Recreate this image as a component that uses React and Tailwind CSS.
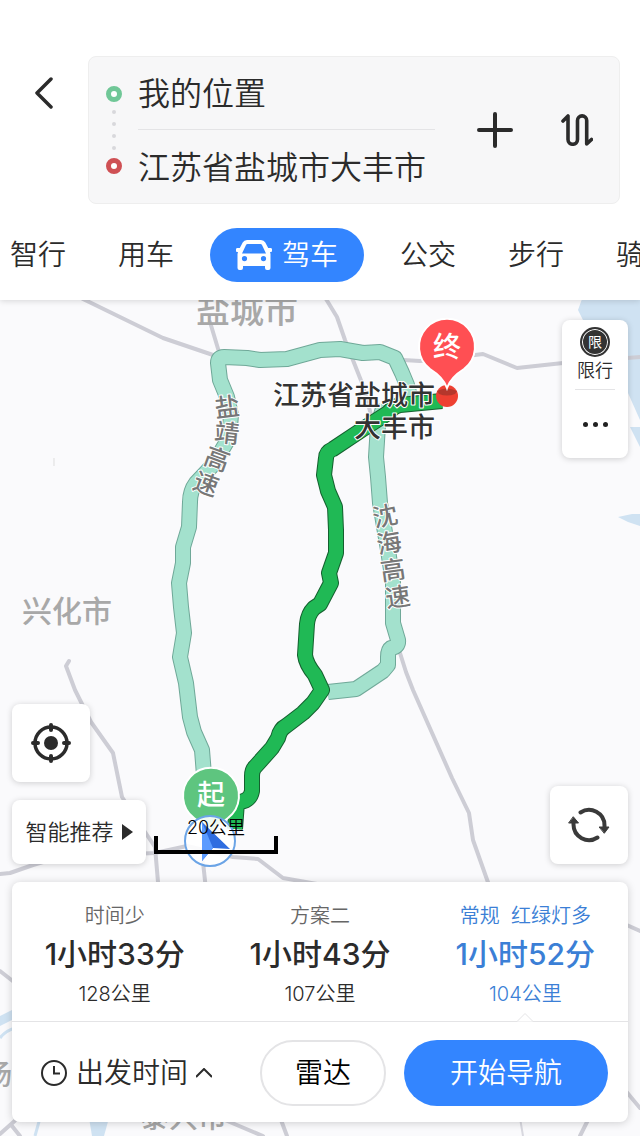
import React, { useState } from 'react'
import clsx from 'clsx'

const modes = ['智行', '用车', '驾车', '公交', '步行', '骑行']

const routes = [
  { id: 1, tag: '时间少', time: '1小时33分', distance: '128公里' },
  { id: 2, tag: '方案二', time: '1小时43分', distance: '107公里' },
  { id: 3, tag: '常规  红绿灯多', time: '1小时52分', distance: '104公里' }
]

// grey roads under the routes
const roads = [
  'M83 299L163 338L213 355',
  'M210 322L219 352',
  'M326 299L337 317L345 340L362 383L372 418',
  'M403 360L420 361L475 355L483 354L517 368L563 363L640 357',
  'M69 661L66 666L75 690L91 722L113 753L122 797L147 835L155 847L158 882',
  'M0 874L10 873L33 865L60 857L155 853L187 846L233 857L258 859L283 878L317 884',
  'M203 862L206 890',
  'M400 653L406 672L413 690L452 778L469 813L473 840L490 888',
  'M620 922L640 931',
  'M620 1084L640 1108',
  'M588 1120L580 1136',
  'M0 971L14 982',
  'M0 1134L18 1118M12 1126L20 1136',
  'M225 1120L263 1136',
  'M281 1120L287 1136'
]

const altRoutes = [
  'M410 396L407 385L402 373L395 358L380 352L363 353L340 349L320 350L287 359L260 360L247 358L224 357Q218 357 218 363L220 380L227 397L231 415L229 438L213 465L196 483Q190 491 190 502L189 527L183 547L183 563L179 583L181 607L184 633L180 657L186 683L190 717L194 732L202 750L204 775',
  'M384 405L378 425L376 457L378 477L380 503L388 550L393 583L393 623L398 640Q399 647 391 648Q388 650 388 657L388 665L383 671L356 689L328 692'
]

const mainRoute =
  'M442 401L400 405Q394 406 388 413L363 429L333 449Q326 452 326 458L324 475L328 491L335 507L336 530L336 553L329 573L331 583L320 604L314 608Q308 614 307 624L305 655Q306 664 315 675L322 690L313 703L303 713L286 726Q280 729 278 738L272 748L255 767Q252 770 252 776L252 791Q250 802 237 802L235 829'

const roadNames = [
  { char: '盐', x: 227, y: 407, angle: -7 },
  { char: '靖', x: 227, y: 433, angle: 6 },
  { char: '高', x: 217, y: 459, angle: 20 },
  { char: '速', x: 206, y: 484, angle: 20 },
  { char: '沈', x: 385, y: 516, angle: -12 },
  { char: '海', x: 389, y: 543, angle: -10 },
  { char: '高', x: 393, y: 570, angle: -8 },
  { char: '速', x: 398, y: 597, angle: -8 }
]

const RouteMap = () => (
  <svg viewBox="0 300 640 836" preserveAspectRatio="xMidYMin slice" className="absolute inset-0 h-full w-full bg-[#fafafc]" aria-hidden="true">
    {/* water */}
    <g fill="#cfe2f2">
      <path d="M582 299L578 310L583 320L600 340L628 393L640 420V299Z" />
      <path d="M630 427H640V447Z" />
      <path d="M618 517L632 514H640V526L628 522Z" />
      <path d="M89 1118H109L104 1136H92Z" />
      <path d="M0 1016L16 1008V1018L0 1026Z" />
    </g>
    <path d="M0 1038Q6 1030 16 1028M40 1118L35 1136" fill="none" stroke="#cfe2f2" strokeWidth="3" />
    <path d="M520 1118L523 1136" stroke="#d8d8df" strokeWidth="2" />

    <g fill="none" stroke="#cdcdd5" strokeWidth="4" strokeLinejoin="round" strokeLinecap="round">
      {roads.map((d) => (
        <path key={d} d={d} />
      ))}
    </g>
    <g fill="#a8a8a8" fontSize="30" fontWeight="500">
      <text x="196" y="323" fontSize="34">盐城市</text>
      <text x="22" y="622">兴化市</text>
      <text x="-16" y="1085" fontSize="28">扬</text>
      <text x="140" y="1128" fontSize="29">泰兴市</text>
    </g>
    <path d="M54 458V466" stroke="#dddddd" />

    <g fill="none" strokeLinejoin="round">
      {altRoutes.map((d) => (
        <path key={d} d={d} stroke="#6fa898" strokeWidth="16" />
      ))}
      {altRoutes.map((d) => (
        <path key={d} d={d} stroke="#a3e1cd" strokeWidth="14" />
      ))}
      <path d={mainRoute} stroke="#14602f" strokeWidth="16" />
      <path d={mainRoute} stroke="#20b955" strokeWidth="14" />
    </g>

    <g fill="#777777" stroke="#ffffff" strokeWidth="2" paintOrder="stroke" strokeLinejoin="round" fontSize="25" fontWeight="500" textAnchor="middle">
      {roadNames.map(({ char, x, y, angle }) => (
        <text key={x + char} x={x} y={y + 9} transform={`rotate(${angle} ${x} ${y})`}>
          {char}
        </text>
      ))}
    </g>

    {/* destination */}
    <circle cx="447" cy="396" r="11" fill="#ee4032" />
    <path d="M437 391Q447 386 457 391L455 394Q447 397 439 394Z" fill="#b5372c" />
    <path d="M447 388C444 379 438 374 430 369A28 28 0 1 1 464 369C456 374 450 379 447 388Z" fill="#ff4f53" stroke="#ffffff" strokeWidth="2" />
    <text x="447" y="357" fill="#ffffff" fontSize="28" fontWeight="500" textAnchor="middle">终</text>
    <g fill="#333333" stroke="#ffffff" strokeWidth="2" paintOrder="stroke" strokeLinejoin="round" fontSize="27" fontWeight="500" textAnchor="end">
      <text x="435" y="405">江苏省盐城市</text>
      <text x="435" y="437">大丰市</text>
    </g>

    {/* origin and current position */}
    <path d="M211 840C209 829 202 824 194 818A28 28 0 1 1 228 818C220 824 213 829 211 840Z" fill="#5ec57f" stroke="#ffffff" strokeWidth="2" />
    <text x="211" y="805" fill="#ffffff" fontSize="28" fontWeight="500" textAnchor="middle">起</text>
    <circle cx="210" cy="841" r="25" fill="#ffffff" fillOpacity="0.9" stroke="#6ba4e6" strokeWidth="2" />
    <path d="M202 822L230 849L213 848L202 861Z" fill="#2f6de0" />
    <path d="M202 822L213 848L202 861Z" fill="#5b9bff" />
  </svg>
)

const CarIcon = () => (
  <svg viewBox="0 0 36 30" className="h-[30px] w-9" aria-hidden="true">
    <path
      fill="#ffffff"
      fillRule="evenodd"
      d="M11 0H25Q28 0 29.300 2.500L32.200 8H35Q36 8 36 9.500V11Q36 12 35 12H34L34.500 14V28Q34.500 30 32.500 30H31Q29 30 29 28V26H7V28Q7 30 5 30H3.500Q1.500 30 1.500 28V14L2 12H1Q0 12 0 11V9.500Q0 8 1 8H3.800L6.700 2.500Q8 0 11 0ZM11.500 4Q10.500 4 10 5L6 13.500H30L26 5Q25.500 4 24.500 4ZM8.500 16A2.600 2.600 0 1 0 8.500 21.200A2.600 2.600 0 1 0 8.500 16ZM27.500 16A2.600 2.600 0 1 0 27.500 21.200A2.600 2.600 0 1 0 27.500 16Z"
    />
  </svg>
)

const SearchCard = () => (
  <div className="flex flex-1 items-center rounded-lg border border-[#eeeeee] bg-[#f7f7f8] pr-[26px] pl-[17px]">
    <div className="flex flex-col items-center gap-2">
      <span className="size-4 rounded-full border-[5px] border-[#70c797] bg-white" />
      {[0, 1, 2, 3].map((i) => (
        <span key={i} className="size-1 rounded-full bg-[#d8d8dc]" />
      ))}
      <span className="size-4 rounded-full border-[5px] border-[#cf5054] bg-white" />
    </div>
    <div className="ml-4 flex min-w-0 flex-1 flex-col text-[32px] font-[350] text-[#2b2b2b]">
      <input aria-label="起点" defaultValue="我的位置" className="h-[73px] w-full border-b border-[#e4e4e6] bg-transparent pb-1 outline-none" />
      <input aria-label="终点" defaultValue="江苏省盐城市大丰市" className="h-[73px] w-full bg-transparent pb-1 outline-none" />
    </div>
    <button aria-label="添加途经点" className="ml-[42px]">
      <svg viewBox="0 0 36 36" className="size-9" stroke="#2b2b2b" strokeWidth="4" strokeLinecap="round">
        <path d="M18 2V34M2 18H34" />
      </svg>
    </button>
    <button aria-label="交换起终点" className="ml-12">
      <svg viewBox="0 0 32 32" className="size-8" fill="none" stroke="#2b2b2b" strokeWidth="3.600" strokeLinecap="round" strokeLinejoin="round">
        <path d="M2 7L7 2V25.500A4.750 4.750 0 0 0 16.500 25.500V6.500A4.600 4.600 0 0 1 25.700 6.500V30L30.500 25.500" />
      </svg>
    </button>
  </div>
)

const App = () => {
  const [mode, setMode] = useState('驾车')
  const [selected, setSelected] = useState(3)

  return (
    <div className="flex min-h-screen flex-col overflow-hidden bg-white font-['Inter','Noto_Sans_CJK_SC',sans-serif] text-[#2b2b2b]">
      <header className="relative z-10 bg-white pt-14 pb-[18px] shadow-[0_1px_6px_rgba(0,0,0,0.15)]">
        <div className="flex items-start pr-5">
          <button aria-label="返回" className="flex h-[74px] w-[88px] items-center justify-center">
            <svg viewBox="0 0 18 32" className="h-8 w-[18px]" fill="none" stroke="#2b2b2b" strokeWidth="3.500" strokeLinecap="round" strokeLinejoin="round">
              <path d="M16 2L2 16L16 30" />
            </svg>
          </button>
          <SearchCard />
        </div>
        <nav className="mt-6 -ml-4 flex overflow-hidden text-[28px] font-[350]">
          {modes.map((name) => (
            <button
              key={name}
              onClick={() => setMode(name)}
              className={clsx(
                'flex h-[54px] shrink-0 items-center gap-2.5 rounded-full px-[26px]',
                name === mode && 'mx-2.5 bg-[#3385ff] text-white'
              )}
            >
              {name === '驾车' && <CarIcon />}
              {name}
            </button>
          ))}
        </nav>
      </header>

      <main className="relative flex flex-1 flex-col">
        <RouteMap />
        <div className="relative flex flex-1 flex-col px-3 pt-5 pb-3.5">
          <div className="flex w-[66px] flex-col items-center self-end rounded-lg bg-white shadow-[0_1px_6px_rgba(0,0,0,0.18)]">
            <button className="flex flex-col items-center pt-[7px] text-[18px] leading-7 font-[350]">
              <span className="flex size-[30px] items-center justify-center rounded-full border-2 border-[#333333] bg-[#333333] text-[14px] font-normal text-white inset-ring inset-ring-white">
                限
              </span>
              限行
            </button>
            <span className="mt-1 h-px w-10 bg-[#e4e4e6]" />
            <button aria-label="更多" className="flex h-[68px] w-full items-center justify-center gap-[5px]">
              {[0, 1, 2].map((i) => (
                <span key={i} className="size-[5px] rounded-full bg-[#222222]" />
              ))}
            </button>
          </div>

          <div className="mt-auto flex items-end justify-between">
            <div className="flex flex-col gap-[18px]">
              <button aria-label="定位" className="flex size-[78px] items-center justify-center rounded-lg bg-white shadow-[0_1px_6px_rgba(0,0,0,0.18)]">
                <svg viewBox="0 0 40 40" className="size-10" fill="none" stroke="#2b2b2b">
                  <circle cx="20" cy="20" r="16" strokeWidth="3.500" />
                  <circle cx="20" cy="20" r="7" fill="#2b2b2b" stroke="none" />
                  <path d="M20 2V7M20 33V38M2 20H7M33 20H38" strokeWidth="4" strokeLinecap="round" />
                </svg>
              </button>
              <div className="flex items-end gap-2">
                <button className="flex h-16 w-[134px] items-center justify-center gap-2 rounded-lg bg-white text-[22px] font-[350] shadow-[0_1px_6px_rgba(0,0,0,0.18)]">
                  智能推荐
                  <svg viewBox="0 0 11 16" className="h-4 w-[11px]">
                    <path d="M0 0L11 8L0 16Z" fill="#2b2b2b" />
                  </svg>
                </button>
                <div className="mb-2.5 w-[124px] text-center text-[18px] leading-5 font-[350] text-black">
                  20公里
                  <div className="-mt-0.5 h-[18px] border-4 border-t-0 border-black" />
                </div>
              </div>
            </div>
            <button aria-label="刷新" className="flex size-[78px] items-center justify-center rounded-lg bg-white shadow-[0_1px_6px_rgba(0,0,0,0.18)]">
              <svg viewBox="0 0 42 36" className="h-9 w-[42px]" fill="none" stroke="#3a3a3a" strokeWidth="4" strokeLinecap="round">
                <path d="M12.500 5.500A15.500 15.500 0 0 1 36.500 18.500V21" />
                <path d="M29.500 30.500A15.500 15.500 0 0 1 5.500 17.500V15" />
                <path d="M31.500 20H41L36.500 26ZM1 16H10.500L5.500 10Z" fill="#3a3a3a" strokeWidth="1" strokeLinejoin="round" />
              </svg>
            </button>
          </div>

          <section className="mt-[18px] rounded-lg bg-white shadow-[0_1px_8px_rgba(0,0,0,0.18)]">
            <div className="grid grid-cols-3 border-b border-[#e4e4e6]">
              {routes.map(({ id, tag, time, distance }) => (
                <button
                  key={id}
                  onClick={() => setSelected(id)}
                  className={clsx('relative flex flex-col items-center pt-[21px] pb-3 text-[20px] font-[350]', id === selected && 'text-[#3b7fd6]')}
                >
                  <span className={clsx('leading-[26px] whitespace-pre', id !== selected && 'text-[#666666]')}>{tag}</span>
                  <span className="text-[30px] leading-[50px] font-medium">{time}</span>
                  <span className="leading-[30px]">{distance}</span>
                  {id === selected && (
                    <svg viewBox="0 0 16 9" className="absolute -bottom-px h-[9px] w-4" fill="#ffffff" stroke="#e4e4e6">
                      <path d="M0 8.500L8 0.500L16 8.500" />
                    </svg>
                  )}
                </button>
              ))}
            </div>
            <div className="flex items-center gap-[18px] pt-[18px] pr-5 pb-4 pl-7">
              <button className="mr-auto flex items-center gap-2 text-[28px] font-[350]">
                <svg viewBox="0 0 28 28" className="size-7" fill="none" stroke="#2b2b2b" strokeWidth="2">
                  <circle cx="14" cy="14" r="12" />
                  <path d="M14 7V14.500H20" />
                </svg>
                出发时间
                <svg viewBox="0 0 16 10" className="h-2.5 w-4" fill="none" stroke="#2b2b2b" strokeWidth="2">
                  <path d="M0 9L8 1L16 9" />
                </svg>
              </button>
              <button className="h-[66px] w-[126px] rounded-full border-2 border-[#e4e4e6] text-[28px] font-[350] text-black">雷达</button>
              <button className="h-[66px] w-[204px] rounded-full bg-[#3385ff] text-[28px] font-[350] text-white">开始导航</button>
            </div>
          </section>
        </div>
      </main>
    </div>
  )
}

export default App
